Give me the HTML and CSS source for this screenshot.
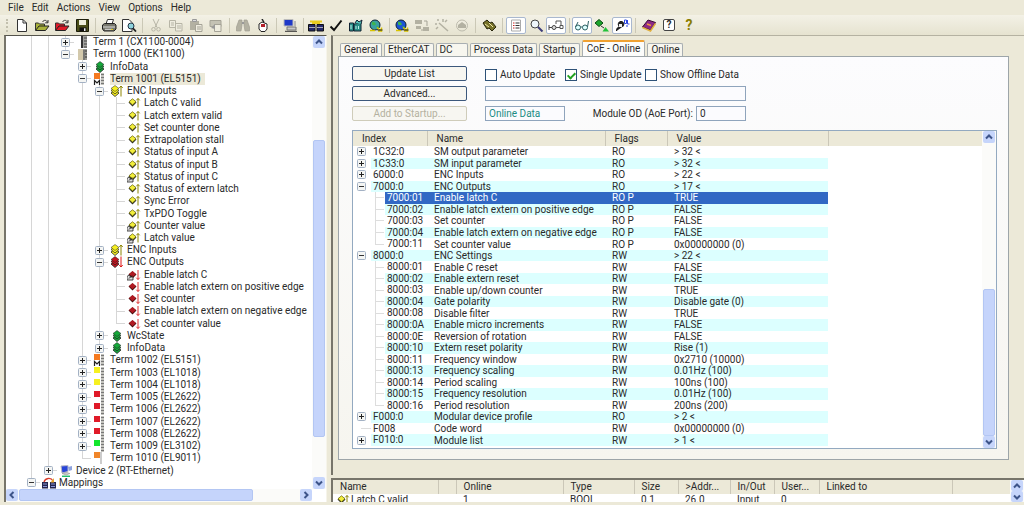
FILE: index.html
```html
<!DOCTYPE html>
<html lang="en">
<head>
<meta charset="utf-8">
<title>System Manager</title>
<link rel="stylesheet" href="styles.css">
</head>
<body>
<svg class="defs" aria-hidden="true">
  <symbol id="plus" viewBox="0 0 9 9"><rect x=".5" y=".5" width="8" height="8" rx="1" fill="#f4f5f3" stroke="#a3b1c4"/><path d="M2 4.500h5M4.500 2v5" stroke="#222" fill="none"/></symbol>
  <symbol id="minus" viewBox="0 0 9 9"><rect x=".5" y=".5" width="8" height="8" rx="1" fill="#f4f5f3" stroke="#a3b1c4"/><path d="M2 4.500h5" stroke="#333" fill="none"/></symbol>
  <symbol id="rack" viewBox="0 0 14 12"><path d="M5 0h6v12H5z" fill="#a2a29e"/><path d="M5 0h2v12H5z" fill="#333"/><path d="M8 2h3M8 5h3M8 8h3M8 11h3" stroke="#444"/></symbol>
  <symbol id="coupler" viewBox="0 0 14 12"><path d="M2 1h5v11H2z" fill="#d3c9ac"/><path d="M7 1h4v11H7z" fill="#9a9a94"/><path d="M8 2v10" stroke="#555"/><path d="M9 3h2M9 6h2M9 9h2" stroke="#333"/></symbol>
  <symbol id="term" viewBox="0 0 14 12"><path d="M1 0h6v6H1z" fill="currentColor"/><path d="M8 0h3v12H8z" fill="#c4c4be"/><path d="M8 1.500h3M8 4.500h3M8 7.500h3M8 10.500h3" stroke="#777"/></symbol>
  <symbol id="termm" viewBox="0 0 14 12"><use href="#term"/><path d="M1.500 12V7.500L4 10l2.500-2.500V12" fill="none" stroke="#222" stroke-width="1.200"/></symbol>
  <symbol id="endterm" viewBox="0 0 14 12"><path d="M1 0h6v6H1z" fill="#f0862a"/><path d="M8 0v12" stroke="#999"/></symbol>
  <symbol id="stack" viewBox="0 0 14 12"><path d="M7 5l4 3-4 3.500L3 8z" fill="currentColor" stroke="#222" stroke-width=".8"/><path d="M7 3l4 2.500L7 9 3 5.500z" fill="currentColor" stroke="#222" stroke-width=".7"/><path d="M7 .5l4 3L7 6.500 3 3.500z" fill="currentColor" stroke="#222" stroke-width=".5"/></symbol>
  <symbol id="stackin" viewBox="0 0 14 12"><g transform="translate(-2)"><use href="#stack"/></g><path d="M11 11.500V1M9.300 3L11 1l1.700 2" fill="none" stroke="#8c8400"/></symbol>
  <symbol id="stackout" viewBox="0 0 14 12"><g transform="translate(-2)"><use href="#stack"/></g><path d="M11 .5V11M9.300 9L11 11l1.700-2" fill="none" stroke="#e01818"/></symbol>
  <symbol id="in" viewBox="0 0 14 12"><path d="M5.500 2.500l4 3-4 4-4-4z" fill="#222"/><path d="M5.500 1.800L9 4.700 5.500 8 2 4.700z" fill="#f2ee3c" stroke="#5c5800" stroke-width=".7"/><path d="M11 10.500V1.500M9.300 3.300L11 1.500l1.700 1.800" fill="none" stroke="#8c8400"/></symbol>
  <symbol id="out" viewBox="0 0 14 12"><path d="M5.500 2.200l4 3.300-4 4-4-4z" fill="#3d0a0a"/><path d="M5.500 2L9 4.900 5.500 8.200 2 4.900z" fill="#b01a22"/><path d="M11 1v9.500M9.300 8.700L11 10.500l1.700-1.800" fill="none" stroke="#e03030"/></symbol>
  <symbol id="link" viewBox="0 0 14 12"><path d="M0 11V7.500l2-1.500 1.500 2H6V11z" fill="#ddd" stroke="#222" stroke-width=".8"/><path d="M2 9.500l3-3" stroke="#222"/></symbol>
  <symbol id="inl" viewBox="0 0 14 12"><use href="#in"/><use href="#link"/></symbol>
  <symbol id="outl" viewBox="0 0 14 12"><use href="#out"/><use href="#link"/></symbol>
  <symbol id="device" viewBox="0 0 14 12"><path d="M2 1l7-.5v6L3 8z" fill="#2744d8" stroke="#b9b9c4"/><path d="M9 2l4-1v4l-3 1z" fill="#8fa3dd"/><path d="M3 8.500l5-1 3 1-4 1.500z" fill="#ccc" stroke="#888" stroke-width=".5"/><path d="M3 11.300h8" stroke="#1fbd6c" stroke-width="1.500"/></symbol>
  <symbol id="map" viewBox="0 0 14 12"><path d="M0 5h6v6.500H0zM8 5h6v6.500H8z" fill="#23264f"/><path d="M1 7h4M9 7h4M1 9.500h4M9 9.500h4" stroke="#8d97d8"/><path d="M2 5C3 1 9 0 11 4" fill="none" stroke="#d63b2a" stroke-width="1.300"/><path d="M12 1v4.500H8.500z" fill="#e8a82a"/></symbol>
  <symbol id="up" viewBox="0 0 12 12"><path d="M3 7.500l3-3 3 3" fill="none" stroke="#3d5489" stroke-width="2"/></symbol>
  <symbol id="down" viewBox="0 0 12 12"><path d="M3 4.500l3 3 3-3" fill="none" stroke="#3d5489" stroke-width="2"/></symbol>
  <symbol id="left" viewBox="0 0 12 12"><path d="M7.500 3l-3 3 3 3" fill="none" stroke="#3d5489" stroke-width="2"/></symbol>
  <symbol id="right" viewBox="0 0 12 12"><path d="M4.500 3l3 3-3 3" fill="none" stroke="#3d5489" stroke-width="2"/></symbol>
  <symbol id="folder" viewBox="0 0 16 13"><path d="M1.500 11V4h3l1 1h5v2" fill="currentColor" stroke="#333"/><path d="M1.500 11.500L5 7h10l-3.500 4.500z" fill="currentColor" stroke="#222"/><path d="M8.500 3c1.500-2.500 4-2 5 .3M14 1v2.800h-2.800" fill="none" stroke="#333"/></symbol>
  <symbol id="globe" viewBox="0 0 16 13"><circle cx="7" cy="6" r="5" fill="currentColor" stroke="#123"/><path d="M4 2.500l3 1 1 2-2 1-2-1zM8 7l3 1-1 2z" fill="#3eb54e"/><path d="M2 11.500h5M9 8.500l5 4M13.500 8.500v3.500H10" stroke="#d8c400" stroke-width="1.500" fill="none"/><path d="M9.500 11h5" stroke="#222"/></symbol>
</svg>

<nav class="menubar" aria-label="Main menu">
  <button>File</button><button>Edit</button><button>Actions</button><button>View</button><button>Options</button><button>Help</button>
</nav>

<div class="toolbar" role="toolbar" aria-label="Tools">
  <span class="grip"></span>
  <button aria-label="New"><svg viewBox="0 0 16 13"><path d="M3.500.5h5.500l3.500 3.500v8.500h-9z" fill="#fff" stroke="#333"/><path d="M9 .5V4h3.500" fill="none" stroke="#333"/></svg></button>
  <button class="c-olive" aria-label="Open"><svg><use href="#folder"/></svg></button>
  <button class="c-red" aria-label="Open from target"><svg><use href="#folder"/></svg></button>
  <button aria-label="Save"><svg viewBox="0 0 16 13"><path d="M2.500.5h12v12h-12z" fill="#4a4d18" stroke="#1c1d0a"/><path d="M5 1h7v5H5z" fill="#eeeedd"/><path d="M5.500 8.500h7V12h-7z" fill="#111"/><path d="M10 9.300h1.500V12H10z" fill="#eee"/></svg></button>
  <span class="sep"></span>
  <button aria-label="Print"><svg viewBox="0 0 16 13"><path d="M5 5l1.500-4.500h6L11 5" fill="#fff" stroke="#333"/><path d="M1.500 6l2-1.500h10L15 6v4l-2 2H3L1.500 10z" fill="#77776c" stroke="#222"/><path d="M2 8h12M4 10.300h7" stroke="#ddd"/><path d="M10 10.500h2" stroke="#e5d21c"/></svg></button>
  <button aria-label="Print preview"><svg viewBox="0 0 16 13"><path d="M1.500.5h6.500l3 3v9h-9.500z" fill="#fff" stroke="#333"/><circle cx="10" cy="7" r="3" fill="#8fd3dc" stroke="#234"/><path d="M12 9.300l3 3.200" stroke="#222" stroke-width="1.800"/></svg></button>
  <span class="sep"></span>
  <button disabled aria-label="Cut"><svg viewBox="0 0 16 13"><path d="M5 0l4 8.500M11 0L7 8.500" stroke="#b7b5a6" fill="none"/><circle cx="5.500" cy="10.300" r="1.800" fill="none" stroke="#b7b5a6"/><circle cx="10.500" cy="10.300" r="1.800" fill="none" stroke="#b7b5a6"/></svg></button>
  <button disabled aria-label="Copy"><svg viewBox="0 0 16 13"><path d="M1.500 1.500h6v7h-6zM7.500 4.500h6.500v7.500H7.500z" fill="#eeecdf" stroke="#b7b5a6"/><path d="M3 4h3M3 6h3M9 7h4M9 9h4" stroke="#b7b5a6"/></svg></button>
  <button disabled aria-label="Paste"><svg viewBox="0 0 16 13"><path d="M2 2h9v9H2z" fill="#b3b1a2"/><path d="M4.500.5h4v2h-4z" fill="#ddd" stroke="#999"/><path d="M7.500 5.500H14v7H7.500z" fill="#eeecdf" stroke="#a5a396"/><path d="M9 8h4M9 10h4" stroke="#a5a396"/></svg></button>
  <button disabled aria-label="Paste with links"><svg viewBox="0 0 16 13"><path d="M2 1.500h11v6H2z" fill="#c4c2b4" stroke="#a5a396"/><path d="M6.500 5.500h6.500v7H6.500z" fill="#eeecdf" stroke="#a5a396"/><path d="M3 9l4-4v5z" fill="#999"/></svg></button>
  <span class="sep"></span>
  <button disabled aria-label="Find"><svg viewBox="0 0 16 13"><path d="M4 1h3v5l-1 6H1.500V8zM9 1h3l2.500 7v4H10L9 6z" fill="#b3b1a2" stroke="#a09e92" stroke-width=".7"/><path d="M7 4h2" stroke="#999" stroke-width="2"/></svg></button>
  <button aria-label="Find free"><svg viewBox="0 0 16 13"><path d="M4 5l3-2 5 2v5l-2 2.500H6L4 10z" fill="#fff" stroke="#222"/><path d="M6 5h4v3H6z" fill="#b3202a"/><path d="M7 0l2 3.500" stroke="#222" stroke-width="1.500"/></svg></button>
  <span class="sep"></span>
  <button aria-label="Choose target"><svg viewBox="0 0 16 13"><path d="M2 .5h9v6.500H2z" fill="#1e38c8" stroke="#bbb"/><path d="M5 8h9v3H5z" fill="#c9c9c9" stroke="#777"/><path d="M3 12.300h12" stroke="#333"/><path d="M13 2v5" stroke="#aaa" stroke-width="1.500"/></svg></button>
  <span class="sep narrow"></span>
  <button aria-label="Generate mappings"><svg viewBox="0 0 16 13"><path d="M.5 5.500h6.500v6.500H.5zM9 5.500h6.500v6.500H9z" fill="#23286b" stroke="#111"/><path d="M1 8.500h6M9 8.500h6" stroke="#aab"/><path d="M2 2.500h12M4 4h8" stroke="#e8ca1e" stroke-width="1.800"/></svg></button>
  <button aria-label="Check configuration"><svg viewBox="0 0 16 13"><path d="M2.500 7.500L6 11 13.500 1.500" fill="none" stroke="#111" stroke-width="2"/></svg></button>
  <button aria-label="Activate configuration"><svg viewBox="0 0 16 13"><path d="M1.500 4h4v8h-4zM6 5l7-1v8H6z" fill="#2a8d86" stroke="#123"/><path d="M7 4l2-3 2 2 3-2-1 4" fill="#57c7bd" stroke="#123"/><path d="M3 6v4M8 7v3M10.500 7v3" stroke="#b8f0e8"/></svg></button>
  <button class="c-teal" aria-label="Run mode"><svg><use href="#globe"/></svg></button>
  <span class="sep narrow"></span>
  <button class="c-blue" aria-label="Config mode"><svg><use href="#globe"/></svg></button>
  <button disabled aria-label="Reload devices"><svg viewBox="0 0 16 13"><path d="M1 1h7v4H1zM9 8h6v4H9zM2 7h5v3H2z" fill="#b3b1a2"/><path d="M10 2h3v5M7 11h2" stroke="#a5a396" fill="none"/></svg></button>
  <button disabled aria-label="Scan devices"><svg viewBox="0 0 16 13"><path d="M5 4l9 8M9 0v3M4 0v2M1 5h2M2 10l2-2M11 3l2-2" stroke="#b3b1a2" stroke-width="1.500"/></svg></button>
  <button disabled aria-label="Toggle free run"><svg viewBox="0 0 16 13"><circle cx="8" cy="6.500" r="5.500" fill="none" stroke="#bdbbad"/><path d="M4 9V6l4-3 4 3v3z" fill="#b3b1a2"/></svg></button>
  <span class="sep"></span>
  <button aria-label="Online"><svg viewBox="0 0 16 13"><path d="M2 4l4-3 3 3 2-1 4 5-4 4-3-3-2 1z" fill="#77722a" stroke="#26240a"/><path d="M4 5l4 3M8 4l4 4" stroke="#f0e9a8"/></svg></button>
  <span class="sep"></span>
  <button class="on" aria-pressed="true" aria-label="Show details"><svg viewBox="0 0 16 13"><path d="M3.500 1h9v11h-9z" fill="#fff" stroke="#aaa"/><path d="M5 4h1.500M5 6.500h1.500M5 9h1.500" stroke="#c22"/><path d="M7.500 4h4M7.500 6.500h4M7.500 9h4" stroke="#333"/></svg></button>
  <button aria-label="Zoom"><svg viewBox="0 0 16 13"><circle cx="7" cy="5" r="4" fill="#eef6fa" stroke="#444"/><path d="M10 8l4.500 4.500" stroke="#3c3c78" stroke-width="2"/></svg></button>
  <button class="on" aria-pressed="true" aria-label="Show links"><svg viewBox="0 0 16 13"><path d="M1 6v5M1 8.500h3" stroke="#444"/><circle cx="6" cy="8.500" r="2" fill="#ddd" stroke="#444"/><path d="M8 8.500h4M8 5V2h5v4M12 6.500h3v3h-3z" fill="none" stroke="#555"/></svg></button>
  <span class="sep narrow"></span>
  <button class="on" aria-pressed="true" aria-label="Watch"><svg viewBox="0 0 16 13"><circle cx="4" cy="8.500" r="2.500" fill="#dff" stroke="#2c5f63"/><circle cx="11" cy="8.500" r="2.500" fill="#dff" stroke="#2c5f63"/><path d="M6.500 8h2M1.500 8l2.500-5M13.500 8l1-6" stroke="#2c5f63" fill="none"/></svg></button>
  <button aria-label="Add variable"><svg viewBox="0 0 16 13"><path d="M5 .5l4 3.500-4 3.500L1 4z" fill="#1ca62c" stroke="#0b4a12"/><path d="M7 7l3 2" stroke="#333"/><path d="M8.500 12.500l3-4.500 3.500 4.500z" fill="#23c23a"/></svg></button>
  <button class="on" aria-pressed="true" aria-label="User"><svg viewBox="0 0 16 13"><path d="M2.500 12c0-3 1-3.500 3-4-2-2-1.500-5.500 1.500-5.500S10.500 5.500 9 7.500" fill="#222" stroke="#111"/><path d="M5 5h3v3H5z" fill="#eee"/><path d="M10.500 1h2v3.500h-2zM13.500 1v4h2M12 7h2" fill="none" stroke="#2b46e0"/></svg></button>
  <span class="sep"></span>
  <button aria-label="Manual"><svg viewBox="0 0 16 13"><path d="M1.500 8L7 1l7.500 2.500L9.500 11z" fill="#8c2a86" stroke="#3a0d36"/><path d="M1.500 8.500l8 3.500 5-7.500" fill="none" stroke="#e0b040" stroke-width="1.500"/><path d="M6 5l4 1.500" stroke="#f09a3a" stroke-width="1.500"/></svg></button>
  <button class="q" aria-label="Topic help"><span class="qbox">?</span></button>
  <button class="q qy" aria-label="Context help">?</button>
</div>

<main class="work">
  <section class="treepane" aria-label="Configuration tree">
    <ul class="tree">
      <li class="l2"><button class="node" aria-label="Expand"><svg><use href="#plus"/></svg></button><svg class="ic"><use href="#rack"/></svg><span>Term 1 (CX1100-0004)</span></li>
      <li class="l2 last"><button class="node" aria-label="Collapse"><svg><use href="#minus"/></svg></button><svg class="ic"><use href="#coupler"/></svg><span>Term 1000 (EK1100)</span></li>
      <li class="l3"><button class="node" aria-label="Expand"><svg><use href="#plus"/></svg></button><svg class="ic c-green"><use href="#stack"/></svg><span>InfoData</span></li>
      <li class="l3"><button class="node" aria-label="Collapse"><svg><use href="#minus"/></svg></button><svg class="ic c-orange"><use href="#termm"/></svg><span class="sel">Term 1001 (EL5151)</span></li>
      <li class="l4"><button class="node" aria-label="Collapse"><svg><use href="#minus"/></svg></button><svg class="ic c-yellow"><use href="#stackin"/></svg><span>ENC Inputs</span></li>
      <li class="l5"><i class="node"></i><svg class="ic"><use href="#in"/></svg><span>Latch C valid</span></li>
      <li class="l5"><i class="node"></i><svg class="ic"><use href="#in"/></svg><span>Latch extern valid</span></li>
      <li class="l5"><i class="node"></i><svg class="ic"><use href="#in"/></svg><span>Set counter done</span></li>
      <li class="l5"><i class="node"></i><svg class="ic"><use href="#in"/></svg><span>Extrapolation stall</span></li>
      <li class="l5"><i class="node"></i><svg class="ic"><use href="#in"/></svg><span>Status of input A</span></li>
      <li class="l5"><i class="node"></i><svg class="ic"><use href="#in"/></svg><span>Status of input B</span></li>
      <li class="l5"><i class="node"></i><svg class="ic"><use href="#inl"/></svg><span>Status of input C</span></li>
      <li class="l5"><i class="node"></i><svg class="ic"><use href="#in"/></svg><span>Status of extern latch</span></li>
      <li class="l5"><i class="node"></i><svg class="ic"><use href="#in"/></svg><span>Sync Error</span></li>
      <li class="l5"><i class="node"></i><svg class="ic"><use href="#in"/></svg><span>TxPDO Toggle</span></li>
      <li class="l5"><i class="node"></i><svg class="ic"><use href="#inl"/></svg><span>Counter value</span></li>
      <li class="l5 last"><i class="node"></i><svg class="ic"><use href="#inl"/></svg><span>Latch value</span></li>
      <li class="l4"><button class="node" aria-label="Expand"><svg><use href="#plus"/></svg></button><svg class="ic c-yellow"><use href="#stackin"/></svg><span>ENC Inputs</span></li>
      <li class="l4"><button class="node" aria-label="Collapse"><svg><use href="#minus"/></svg></button><svg class="ic c-dark"><use href="#stackout"/></svg><span>ENC Outputs</span></li>
      <li class="l5"><i class="node"></i><svg class="ic"><use href="#outl"/></svg><span>Enable latch C</span></li>
      <li class="l5"><i class="node"></i><svg class="ic"><use href="#out"/></svg><span>Enable latch extern on positive edge</span></li>
      <li class="l5"><i class="node"></i><svg class="ic"><use href="#out"/></svg><span>Set counter</span></li>
      <li class="l5"><i class="node"></i><svg class="ic"><use href="#out"/></svg><span>Enable latch extern on negative edge</span></li>
      <li class="l5 last"><i class="node"></i><svg class="ic"><use href="#out"/></svg><span>Set counter value</span></li>
      <li class="l4"><button class="node" aria-label="Expand"><svg><use href="#plus"/></svg></button><svg class="ic c-green"><use href="#stack"/></svg><span>WcState</span></li>
      <li class="l4 last"><button class="node" aria-label="Expand"><svg><use href="#plus"/></svg></button><svg class="ic c-green"><use href="#stack"/></svg><span>InfoData</span></li>
      <li class="l3"><button class="node" aria-label="Expand"><svg><use href="#plus"/></svg></button><svg class="ic c-orange"><use href="#termm"/></svg><span>Term 1002 (EL5151)</span></li>
      <li class="l3"><button class="node" aria-label="Expand"><svg><use href="#plus"/></svg></button><svg class="ic c-yellow"><use href="#term"/></svg><span>Term 1003 (EL1018)</span></li>
      <li class="l3"><button class="node" aria-label="Expand"><svg><use href="#plus"/></svg></button><svg class="ic c-yellow"><use href="#term"/></svg><span>Term 1004 (EL1018)</span></li>
      <li class="l3"><button class="node" aria-label="Expand"><svg><use href="#plus"/></svg></button><svg class="ic c-red"><use href="#term"/></svg><span>Term 1005 (EL2622)</span></li>
      <li class="l3"><button class="node" aria-label="Expand"><svg><use href="#plus"/></svg></button><svg class="ic c-red"><use href="#term"/></svg><span>Term 1006 (EL2622)</span></li>
      <li class="l3"><button class="node" aria-label="Expand"><svg><use href="#plus"/></svg></button><svg class="ic c-red"><use href="#term"/></svg><span>Term 1007 (EL2622)</span></li>
      <li class="l3"><button class="node" aria-label="Expand"><svg><use href="#plus"/></svg></button><svg class="ic c-red"><use href="#term"/></svg><span>Term 1008 (EL2622)</span></li>
      <li class="l3"><button class="node" aria-label="Expand"><svg><use href="#plus"/></svg></button><svg class="ic c-lime"><use href="#term"/></svg><span>Term 1009 (EL3102)</span></li>
      <li class="l3 last"><i class="node"></i><svg class="ic"><use href="#endterm"/></svg><span>Term 1010 (EL9011)</span></li>
      <li class="l1 last"><button class="node" aria-label="Expand"><svg><use href="#plus"/></svg></button><svg class="ic"><use href="#device"/></svg><span>Device 2 (RT-Ethernet)</span></li>
      <li class="l0 last"><button class="node" aria-label="Collapse"><svg><use href="#minus"/></svg></button><svg class="ic"><use href="#map"/></svg><span>Mappings</span></li>
    </ul>
    <div class="vbar treebar"><button aria-label="Scroll up"><svg><use href="#up"/></svg></button><span class="before"></span><span class="thumb"></span><span class="after"></span><button aria-label="Scroll down"><svg><use href="#down"/></svg></button></div>
    <div class="hbar"><button aria-label="Scroll left"><svg><use href="#left"/></svg></button><span class="thumb"></span><span class="after"></span><button aria-label="Scroll right"><svg><use href="#right"/></svg></button></div>
  </section>

  <div class="side">
    <section class="editor">
      <div class="tabs" role="tablist">
        <button role="tab">General</button><button role="tab">EtherCAT</button><button role="tab" class="dc">DC</button><button role="tab">Process Data</button><button role="tab">Startup</button><button role="tab" class="active" aria-selected="true">CoE - Online</button><button role="tab">Online</button>
      </div>
      <div class="panel" role="tabpanel">
        <div class="form">
          <div class="actions">
            <button>Update List</button>
            <button>Advanced...</button>
            <button disabled>Add to Startup...</button>
          </div>
          <div class="fields">
            <div class="checks">
              <label><input type="checkbox">Auto Update</label>
              <label><input type="checkbox" checked>Single Update</label>
              <label><input type="checkbox">Show Offline Data</label>
            </div>
            <input type="text" class="wide" aria-label="Filter">
            <div class="line">
              <input type="text" class="state" value="Online Data" aria-label="State" readonly>
              <label for="od">Module OD (AoE Port):</label>
              <input type="text" class="port" id="od" value="0">
            </div>
          </div>
        </div>
        <div class="list">
          <table class="objects">
            <colgroup><col class="c1"><col class="c2"><col class="c3"><col class="c4"><col></colgroup>
            <thead><tr><th>Index</th><th>Name</th><th>Flags</th><th>Value</th><th class="rest"></th></tr></thead>
            <tbody>
              <tr class="root"><td><div><svg><use href="#plus"/></svg><span>1C32:0</span></div></td><td>SM output parameter</td><td>RO</td><td>&gt; 32 &lt;</td></tr>
              <tr class="root"><td><div><svg><use href="#plus"/></svg><span>1C33:0</span></div></td><td>SM input parameter</td><td>RO</td><td>&gt; 32 &lt;</td></tr>
              <tr class="root"><td><div><svg><use href="#plus"/></svg><span>6000:0</span></div></td><td>ENC Inputs</td><td>RO</td><td>&gt; 22 &lt;</td></tr>
              <tr class="root"><td><div><svg><use href="#minus"/></svg><span>7000:0</span></div></td><td>ENC Outputs</td><td>RO</td><td>&gt; 17 &lt;</td></tr>
              <tr class="sub picked"><td><div><span>7000:01</span></div></td><td>Enable latch C</td><td>RO P</td><td>TRUE</td></tr>
              <tr class="sub"><td><div><span>7000:02</span></div></td><td>Enable latch extern on positive edge</td><td>RO P</td><td>FALSE</td></tr>
              <tr class="sub"><td><div><span>7000:03</span></div></td><td>Set counter</td><td>RO P</td><td>FALSE</td></tr>
              <tr class="sub"><td><div><span>7000:04</span></div></td><td>Enable latch extern on negative edge</td><td>RO P</td><td>FALSE</td></tr>
              <tr class="sub end"><td><div><span>7000:11</span></div></td><td>Set counter value</td><td>RO P</td><td>0x00000000 (0)</td></tr>
              <tr class="root"><td><div><svg><use href="#minus"/></svg><span>8000:0</span></div></td><td>ENC Settings</td><td>RW</td><td>&gt; 22 &lt;</td></tr>
              <tr class="sub"><td><div><span>8000:01</span></div></td><td>Enable C reset</td><td>RW</td><td>FALSE</td></tr>
              <tr class="sub"><td><div><span>8000:02</span></div></td><td>Enable extern reset</td><td>RW</td><td>FALSE</td></tr>
              <tr class="sub"><td><div><span>8000:03</span></div></td><td>Enable up/down counter</td><td>RW</td><td>TRUE</td></tr>
              <tr class="sub"><td><div><span>8000:04</span></div></td><td>Gate polarity</td><td>RW</td><td>Disable gate (0)</td></tr>
              <tr class="sub"><td><div><span>8000:08</span></div></td><td>Disable filter</td><td>RW</td><td>TRUE</td></tr>
              <tr class="sub"><td><div><span>8000:0A</span></div></td><td>Enable micro increments</td><td>RW</td><td>FALSE</td></tr>
              <tr class="sub"><td><div><span>8000:0E</span></div></td><td>Reversion of rotation</td><td>RW</td><td>FALSE</td></tr>
              <tr class="sub"><td><div><span>8000:10</span></div></td><td>Extern reset polarity</td><td>RW</td><td>Rise (1)</td></tr>
              <tr class="sub"><td><div><span>8000:11</span></div></td><td>Frequency window</td><td>RW</td><td>0x2710 (10000)</td></tr>
              <tr class="sub"><td><div><span>8000:13</span></div></td><td>Frequency scaling</td><td>RW</td><td>0.01Hz (100)</td></tr>
              <tr class="sub"><td><div><span>8000:14</span></div></td><td>Period scaling</td><td>RW</td><td>100ns (100)</td></tr>
              <tr class="sub"><td><div><span>8000:15</span></div></td><td>Frequency resolution</td><td>RW</td><td>0.01Hz (100)</td></tr>
              <tr class="sub end"><td><div><span>8000:16</span></div></td><td>Period resolution</td><td>RW</td><td>200ns (200)</td></tr>
              <tr class="root"><td><div><svg><use href="#plus"/></svg><span>F000:0</span></div></td><td>Modular device profile</td><td>RO</td><td>&gt; 2 &lt;</td></tr>
              <tr class="root"><td><div><i></i><span>F008</span></div></td><td>Code word</td><td>RW</td><td>0x00000000 (0)</td></tr>
              <tr class="root"><td><div><svg><use href="#plus"/></svg><span>F010:0</span></div></td><td>Module list</td><td>RW</td><td>&gt; 1 &lt;</td></tr>
            </tbody>
          </table>
          <div class="vbar listbar"><button aria-label="Scroll up"><svg><use href="#up"/></svg></button><span class="before"></span><span class="thumb"></span><button aria-label="Scroll down"><svg><use href="#down"/></svg></button></div>
        </div>
      </div>
    </section>

    <section class="vars" aria-label="Variables">
      <div class="clip">
        <table>
          <colgroup><col class="v1"><col class="v2"><col class="v3"><col class="v4"><col class="v5"><col class="v6"><col class="v7"><col class="v8"><col class="v9"><col></colgroup>
          <thead><tr><th>Name</th><th></th><th>Online</th><th>Type</th><th>Size</th><th>&gt;Addr...</th><th>In/Out</th><th>User...</th><th>Linked to</th><th class="rest"></th></tr></thead>
          <tbody><tr><td><div class="vname"><svg class="ic"><use href="#in"/></svg>Latch C valid</div></td><td></td><td>1</td><td>BOOL</td><td>0.1</td><td>26.0</td><td>Input</td><td>0</td><td></td></tr></tbody>
        </table>
      </div>
      <div class="vbar tiny"><button aria-label="Scroll up"><svg><use href="#up"/></svg></button><button aria-label="Scroll down"><svg><use href="#down"/></svg></button></div>
    </section>
  </div>
</main>
</body>
</html>
```
FILE: styles.css
```css
* { box-sizing: border-box; }

body {
  margin: 0;
  height: 100vh;
  display: grid;
  grid-template-rows: 15px 20px minmax(0, 1fr);
  padding-bottom: 3px;
  background: #ece9d8;
  color: #2a2a2a;
  font: 10px/12px Roboto, "Liberation Sans", sans-serif;
  overflow: hidden;
}

button, input { font: inherit; color: inherit; margin: 0; }
button { padding: 0; border: 0; background: none; }
.defs { position: absolute; width: 0; height: 0; }

.c-olive { color: #a9b23a; }
.c-red { color: #e01a28; }
.c-dark { color: #c4141f; }
.c-teal { color: #3aa0a0; }
.c-blue { color: #1c54d8; }
.c-green { color: #16a83a; }
.c-orange { color: #f57a20; }
.c-yellow { color: #f6f020; }
.c-lime { color: #14e62c; }

/* Menu and toolbar */
.menubar { display: flex; gap: 8px; padding-left: 8px; }

.toolbar {
  display: flex;
  align-items: center;
  background: linear-gradient(#f3f1e6, #e6e3d0);
}
.toolbar button {
  flex: none;
  width: 20px;
  height: 17px;
  display: flex;
  align-items: center;
  justify-content: center;
}
.toolbar svg { width: 16px; height: 13px; }
.toolbar .on { background: #fff; border: 1px solid #a9b8cf; border-radius: 2px; }
.grip { flex: none; width: 3px; height: 13px; margin: 0 3px 0 6px; border-left: 2px dotted #c2bfad; }
.sep { flex: none; width: 7px; height: 15px; background: linear-gradient(#cbc8b6, #cbc8b6) 3px 0 / 1px 100% no-repeat; }
.sep.narrow { width: 6px; }
.qbox { width: 12px; height: 12px; line-height: 10px; border: 1px solid #444; border-radius: 2px; background: #fff; font-weight: bold; }
.qy { font-size: 14px; font-weight: bold; color: #8a7d00; }

/* Work area */
.work {
  display: grid;
  grid-template-columns: 323fr 693fr;
  gap: 4px;
  padding-left: 4px;
  min-height: 0;
}

.treepane {
  display: grid;
  grid-template-columns: minmax(0, 1fr) 14px;
  grid-template-rows: minmax(0, 1fr) 13px;
  background: #fff;
  border-top: 1px solid #55544c;
  border-left: 2px solid #77756a;
  border-right: 1px solid #f6f4ea;
}

.tree {
  --line: linear-gradient(#d6d6d6, #d6d6d6);
  list-style: none;
  margin: 0;
  padding: 0;
  display: grid;
  grid-auto-rows: minmax(0, 1fr);
  min-height: 0;
}
.tree li {
  display: flex;
  align-items: center;
  min-height: 0;
  line-height: 12px;
  white-space: nowrap;
  background-repeat: no-repeat;
  background-size: 1px 100%;
}
.l0 { padding-left: 17px; }
.l1 { padding-left: 34px; background-image: var(--line); background-position: 25px 0; }
.l2 { padding-left: 51px; background-image: var(--line), var(--line); background-position: 25px 0, 42px 0; }
.l3 { padding-left: 68px; background-image: var(--line), var(--line); background-position: 25px 0, 42px 0; }
.l4 { padding-left: 85px; background-image: var(--line), var(--line), var(--line); background-position: 25px 0, 42px 0, 76px 0; }
.l5 { padding-left: 102px; background-image: var(--line), var(--line), var(--line), var(--line); background-position: 25px 0, 42px 0, 76px 0, 93px 0; }

.node {
  flex: none;
  width: 17px;
  height: 100%;
  display: flex;
  align-items: center;
  justify-content: center;
  background-image: var(--line), var(--line);
  background-repeat: no-repeat;
  background-size: 1px 100%, 9px 1px;
  background-position: 8px 0, 8px 50%;
}
.last .node { background-size: 1px 50%, 9px 1px; }
.node svg { width: 9px; height: 9px; }
.ic { flex: none; width: 14px; height: 12px; margin: 0 3px 0 2px; }
.tree .sel { background: #ece9d8; padding-right: 4px; }

/* Scroll bars */
.vbar, .hbar { display: flex; background: #fbfbf9; }
.vbar { flex-direction: column; padding: 0 1px; }
.vbar button, .hbar button {
  flex: none;
  width: 12px;
  height: 12px;
  display: flex;
  background: #c6d5fb;
  border-radius: 2px;
}
.vbar svg, .hbar svg { width: 12px; height: 12px; }
.thumb { background: #c5d4fb; border: 1px solid #b3c6f3; border-radius: 2px; }
.treebar .before { flex: 92; }
.treebar .thumb { flex: 296; }
.treebar .after { flex: 40; }
.hbar { grid-column: 1; padding-bottom: 1px; }
.hbar .thumb { flex: 230; margin: 0 1px; }
.hbar .after { flex: 46; }
.listbar .before { flex: 146; }
.listbar .thumb { flex: 146; }

/* Editor */
.side { display: flex; flex-direction: column; gap: 3px; min-width: 0; min-height: 0; }
.editor {
  flex: 1;
  min-height: 0;
  display: flex;
  flex-direction: column;
  padding: 4px 15px 15px 5px;
  border-left: 2px solid #77756a;
  border-top: 1px solid #b5b2a2;
}
.tabs { display: flex; align-items: flex-end; gap: 2px; padding-left: 2px; height: 16px; }
.tabs button {
  height: 13px;
  padding: 0 3px;
  line-height: 12px;
  background: #f7f6ef;
  border: 1px solid #a8aeb2;
  border-bottom: 0;
  border-radius: 2px 2px 0 0;
  white-space: nowrap;
}
.tabs .dc { padding-right: 14px; }
.tabs .active { height: 16px; padding: 0 4px; background: #fcfcfb; border-top: 2px solid #f0a132; }

.panel {
  flex: 1;
  min-height: 0;
  display: flex;
  flex-direction: column;
  gap: 9px;
  padding: 9px 11px 10px 13px;
  background: linear-gradient(#fcfcfe, #f6f5ef);
  border: 1px solid #9da5a9;
}
.form { display: flex; gap: 18px; }
.actions { width: 115px; display: flex; flex-direction: column; gap: 5px; }
.actions button { height: 15px; background: #f7f6f1; border: 1px solid #3c587c; border-radius: 2px; }
.actions button:disabled { border-color: #cfccba; color: #b4b1a0; }
.fields { flex: none; width: 261px; display: flex; flex-direction: column; gap: 5px; }
.fields input[type="text"] { height: 15px; padding: 0 3px; background: #fbfbfe; border: 1px solid #8fa4bc; outline: 0; }
.checks { display: grid; grid-template-columns: 80px 80px auto; height: 15px; padding-top: 3px; white-space: nowrap; }
.checks label { display: flex; align-items: center; gap: 3px; }
.checks input {
  appearance: none;
  flex: none;
  width: 12px;
  height: 12px;
  background: #fff;
  border: 1px solid #2e5278;
  display: grid;
  place-items: center;
}
.checks input:checked::before {
  content: "";
  width: 3px;
  height: 6px;
  border: solid #21a121;
  border-width: 0 2px 2px 0;
  transform: rotate(45deg);
}
.line { display: flex; align-items: center; justify-content: space-between; }
.fields .state { width: 80px; color: #1c8c84; }
.line label { margin-left: auto; margin-right: 3px; }
.fields .port { width: 50px; }

.list { flex: 1; min-height: 0; display: flex; background: #fff; border: 1px solid #93a9c0; }
table { border-collapse: collapse; table-layout: fixed; width: 100%; }
th { padding: 0 0 0 9px; font-weight: normal; text-align: left; background: #ece9d8; border-right: 1px solid #cbc7b8; }
th.rest { border-right: 0; }
td { padding: 0 0 0 7px; white-space: nowrap; }

.objects { height: 315px; line-height: 11px; }
.objects th { height: 15px; }
.c1 { width: 74px; }
.c2 { width: 178px; }
.c3 { width: 62px; }
.c4 { width: 161px; }
.objects tbody tr:nth-child(even) td:not(:first-child),
.objects tbody tr:nth-child(even) span { background: #dcffff; }
.objects tbody .picked td:not(:first-child),
.objects tbody .picked span { background: #3168c4; color: #fff; }
.objects td:first-child { padding: 0; height: 11px; }
.objects td div { display: flex; align-items: center; height: 100%; padding-left: 4px; }
.objects td svg { flex: none; width: 9px; height: 9px; margin-right: 5px; }
.objects td i { flex: none; width: 10px; height: 1px; margin: 0 0 0 4px; background: #ddd; }
.objects span { flex: 1; height: 100%; padding-left: 2px; }
.objects .sub div { padding-left: 32px; background: linear-gradient(#ddd, #ddd) 22px 0 / 1px 100% no-repeat, linear-gradient(#ddd, #ddd) 22px 50% / 9px 1px no-repeat; }
.objects .end div { background-size: 1px 50%, 9px 1px; }

/* Variable list */
.vars { flex: none; display: flex; height: 24px; background: #fff; border-top: 2px solid #77756a; border-left: 2px solid #77756a; overflow: hidden; }
.clip { flex: 1; min-width: 0; overflow: hidden; }
.vars th { height: 14px; }
.vars th, .vars td { padding-left: 7px; }
.vars td:first-child { padding-left: 3px; }
.vname { display: flex; align-items: center; }
.v1 { width: 105px; }
.v2 { width: 18px; }
.v3 { width: 107px; }
.v4 { width: 71px; }
.v5 { width: 44px; }
.v6 { width: 52px; }
.v7 { width: 44px; }
.v8 { width: 45px; }
.v9 { width: 133px; }
.vname .ic { margin: 0 1px 0 0; }
.tiny button { height: 11px; }
```
